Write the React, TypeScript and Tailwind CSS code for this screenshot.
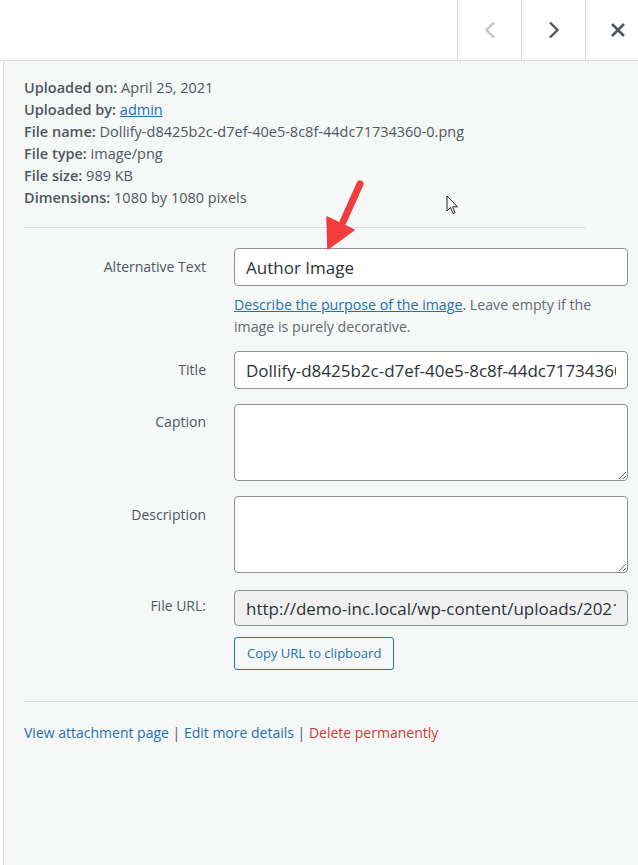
const info = [
  ["Uploaded on:", "April 25, 2021"],
  ["Uploaded by:", "admin"],
  ["File name:", "Dollify-d8425b2c-d7ef-40e5-8c8f-44dc71734360-0.png"],
  ["File type:", "image/png"],
  ["File size:", "989 KB"],
  ["Dimensions:", "1080 by 1080 pixels"],
];

function Label({ children }: { children: React.ReactNode }) {
  return (
    <div className="w-[182px] shrink-0 text-right text-[14px] text-[#50575e]">
      {children}
    </div>
  );
}

export default function App() {
  return (
    <div
      className="relative min-h-[865px] overflow-hidden bg-white text-[#50575e]"
      style={{ fontFamily: '"Open Sans", "Noto Sans", sans-serif' }}
    >
      <div className="flex h-[61px] justify-end border-b border-[#dcdcde] bg-white">
        <button className="flex w-[64px] shrink-0 items-center justify-center border-l border-[#dcdcde]">
          <svg width="12" height="18" viewBox="0 0 12 18">
            <path d="M10 1.5 L2.5 9 L10 16.5" stroke="#c3c4c7" strokeWidth="2.4" fill="none" />
          </svg>
        </button>
        <button className="flex w-[64px] shrink-0 items-center justify-center border-l border-[#dcdcde]">
          <svg width="12" height="18" viewBox="0 0 12 18">
            <path d="M2 1.5 L9.5 9 L2 16.5" stroke="#50575e" strokeWidth="2.4" fill="none" />
          </svg>
        </button>
        <button className="-mr-[11px] flex w-[64px] shrink-0 items-center justify-center border-l border-[#dcdcde]">
          <svg width="16" height="16" viewBox="0 0 16 16">
            <path d="M2 2 L14 14 M14 2 L2 14" stroke="#50575e" strokeWidth="2.6" fill="none" />
          </svg>
        </button>
      </div>

      <div className="ml-[3px] min-h-[804px] border-l border-[#dcdcde] bg-[#f6f7f7] pl-[20px]">
        <div className="w-[562px] border-b border-[#dcdcde] pt-[16px] pb-[18px] text-[14.5px] leading-[22px]">
          {info.map(([k, v]) => (
            <div key={k} className="whitespace-nowrap">
              <span className="font-semibold">{k}</span>{" "}
              {k === "Uploaded by:" ? (
                <a className="text-[#2271b1] underline">{v}</a>
              ) : (
                v
              )}
            </div>
          ))}
        </div>

        <div className="flex flex-col pt-[20px] pr-[10px]">
          <div className="flex gap-[28px]">
            <div className="pt-[8px]">
              <Label>Alternative Text</Label>
            </div>
            <div className="flex flex-1 flex-col">
              <input
                readOnly
                value="Author Image"
                className="h-[38px] w-full rounded-[4px] border border-[#8c8f94] bg-white px-[11px] text-[17px] text-[#2c3338] outline-none"
              />
              <p className="mt-[8px] text-[14.2px] leading-[22px] text-[#646970]">
                <a className="text-[#2271b1] underline">Describe the purpose of the image</a>. Leave
                empty if the image is purely decorative.
              </p>
            </div>
          </div>

          <div className="mt-[13px] flex gap-[28px]">
            <div className="pt-[8px]">
              <Label>Title</Label>
            </div>
            <input
              readOnly
              value="Dollify-d8425b2c-d7ef-40e5-8c8f-44dc71734360-0"
              className="h-[38px] flex-1 rounded-[4px] border border-[#8c8f94] bg-white px-[11px] text-[17px] text-[#2c3338] outline-none"
            />
          </div>

          <div className="mt-[15px] flex gap-[28px]">
            <div className="pt-[7px]">
              <Label>Caption</Label>
            </div>
            <textarea
              readOnly
              className="h-[77px] flex-1 resize-y rounded-[4px] border border-[#8c8f94] bg-white outline-none"
            />
          </div>

          <div className="mt-[15px] flex gap-[28px]">
            <div className="pt-[8px]">
              <Label>Description</Label>
            </div>
            <textarea
              readOnly
              className="h-[77px] flex-1 resize-y rounded-[4px] border border-[#8c8f94] bg-white outline-none"
            />
          </div>

          <div className="mt-[17px] flex gap-[28px]">
            <div className="pt-[5px]">
              <Label>File URL:</Label>
            </div>
            <div className="flex flex-1 flex-col items-start">
              <input
                readOnly
                value="http://demo-inc.local/wp-content/uploads/2021/04/Dollify-d8425b2c-d7ef-40e5-8c8f-44dc71734360-0.png"
                className="h-[36px] w-full rounded-[4px] border border-[#8c8f94] bg-[#f0f0f1] px-[11px] text-[17px] text-[#2c3338] outline-none"
              />
              <button className="mt-[11px] h-[33px] rounded-[3px] border border-[#2271b1] bg-[#f6f7f7] px-[12px] text-[13px] text-[#2271b1]">
                Copy URL to clipboard
              </button>
            </div>
          </div>
        </div>

        <div className="mt-[31px] border-t border-[#dcdcde]" />

        <div className="pt-[20px] text-[14px] leading-[22px] text-[#50575e]">
          <a className="text-[#2271b1]">View attachment page</a> |{" "}
          <a className="text-[#2271b1]">Edit more details</a> |{" "}
          <a className="text-[#d63638]">Delete permanently</a>
        </div>
      </div>

      <svg
        className="pointer-events-none absolute left-[318px] top-[178px]"
        width="50"
        height="76"
        viewBox="0 0 50 76"
      >
        <path d="M42 6 L25 44" stroke="#f03e3e" strokeWidth="7" strokeLinecap="round" fill="none" />
        <path d="M10 71 L9 39 L36 52 Z" fill="#f03e3e" stroke="#f03e3e" strokeWidth="1.5" strokeLinejoin="round" />
      </svg>

      <svg
        className="pointer-events-none absolute left-[446px] top-[195px]"
        width="14"
        height="21"
        viewBox="0 0 14 21"
      >
        <path d="M1 1 L1 16 L4.5 12.5 L7 18.5 L9 17.6 L6.6 11.8 L11.5 11.8 Z" fill="white" stroke="#222" strokeWidth="1" strokeLinejoin="round" />
      </svg>
    </div>
  );
}
